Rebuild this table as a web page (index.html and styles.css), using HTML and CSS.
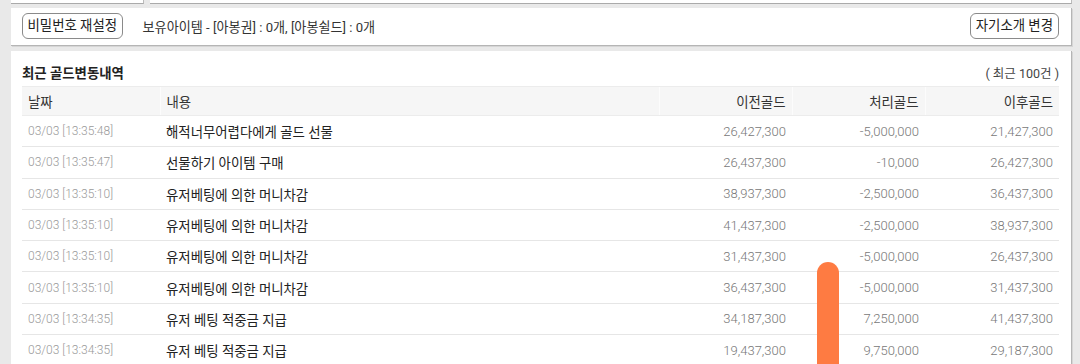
FILE: index.html
```html
<!DOCTYPE html>
<html lang="ko">
<head>
<meta charset="utf-8">
<link rel="stylesheet" href="styles.css">
</head>
<body>
<div class="page">
  <div class="top-strip">
    <div class="strip-box strip-left"></div>
    <div class="strip-box strip-right"></div>
  </div>
  <div class="panel info-bar">
    <button class="btn">비밀번호 재설정</button>
    <span class="items">보유아이템 - [아봉권] : 0개, [아봉쉴드] : 0개</span>
    <button class="btn btn-right">자기소개 변경</button>
  </div>
  <div class="panel history">
    <div class="history-head">
      <span class="title">최근 골드변동내역</span>
      <span class="count">( 최근 100건 )</span>
    </div>
    <table class="gold-table">
      <colgroup>
        <col class="c-date"><col class="c-desc"><col class="c-num"><col class="c-num"><col class="c-num3">
      </colgroup>
      <thead>
        <tr><th class="l">날짜</th><th class="l">내용</th><th>이전골드</th><th>처리골드</th><th>이후골드</th></tr>
      </thead>
      <tbody>
        <tr><td class="date">03/03 [13:35:48]</td><td class="desc">해적너무어렵다에게 골드 선물</td><td class="num">26,427,300</td><td class="num">-5,000,000</td><td class="num">21,427,300</td></tr>
        <tr><td class="date">03/03 [13:35:47]</td><td class="desc">선물하기 아이템 구매</td><td class="num">26,437,300</td><td class="num">-10,000</td><td class="num">26,427,300</td></tr>
        <tr><td class="date">03/03 [13:35:10]</td><td class="desc">유저베팅에 의한 머니차감</td><td class="num">38,937,300</td><td class="num">-2,500,000</td><td class="num">36,437,300</td></tr>
        <tr><td class="date">03/03 [13:35:10]</td><td class="desc">유저베팅에 의한 머니차감</td><td class="num">41,437,300</td><td class="num">-2,500,000</td><td class="num">38,937,300</td></tr>
        <tr><td class="date">03/03 [13:35:10]</td><td class="desc">유저베팅에 의한 머니차감</td><td class="num">31,437,300</td><td class="num">-5,000,000</td><td class="num">26,437,300</td></tr>
        <tr><td class="date">03/03 [13:35:10]</td><td class="desc">유저베팅에 의한 머니차감</td><td class="num">36,437,300</td><td class="num">-5,000,000</td><td class="num">31,437,300</td></tr>
        <tr><td class="date">03/03 [13:34:35]</td><td class="desc">유저 베팅 적중금 지급</td><td class="num">34,187,300</td><td class="num">7,250,000</td><td class="num">41,437,300</td></tr>
        <tr><td class="date">03/03 [13:34:35]</td><td class="desc">유저 베팅 적중금 지급</td><td class="num">19,437,300</td><td class="num">9,750,000</td><td class="num">29,187,300</td></tr>
      </tbody>
    </table>
  </div>
</div>
<div class="marker"></div>
</body>
</html>
```

FILE: styles.css
```css
html, body {
  margin: 0;
  padding: 0;
  background: #e9e9e9;
  height: 364px;
  overflow: hidden;
  font-family: Roboto, "Noto Sans CJK KR", sans-serif;
  color: #333;
}

.page {
  width: 1061px;
  margin-left: 11px;
}

.top-strip {
  display: flex;
  gap: 6px;
  height: 4px;
}

.strip-box {
  background: #fff;
  border-bottom: 1px solid #aaa;
  border-right: 1px solid #bbb;
  box-sizing: border-box;
}

.strip-left { width: 133px; }
.strip-right { flex: 1; }

.panel {
  background: #fff;
  border-right: 1px solid #b5b5b5;
  border-bottom: 1px solid #b5b5b5;
  box-shadow: 1px 1px 0 #d6d6d6;
  box-sizing: border-box;
}

.info-bar {
  margin-top: 4px;
  height: 38px;
  display: flex;
  align-items: center;
  padding: 0 12px 1px 11px;
  font-size: 13.4px;
}

.btn {
  font-family: Roboto, "Noto Sans CJK KR", sans-serif;
  font-size: 13.4px;
  color: #222;
  background: #fff;
  border: 1px solid #8a8a8a;
  border-radius: 6px;
  height: 26px;
  padding: 0 4.5px;
  line-height: 24px;
}

.items {
  margin-left: 20px;
  color: #333;
  font-size: 13.1px;
  font-weight: 400;
}

.btn-right {
  margin-left: auto;
  padding: 0 5px;
}

.history {
  margin-top: 5px;
  padding: 11px 12px 0 11px;
  height: 320px;
}

.history-head {
  display: flex;
  justify-content: space-between;
  align-items: center;
  height: 20px;
  margin-bottom: 4px;
}

.title {
  font-size: 13.4px;
  font-weight: 700;
  color: #222;
}

.count {
  font-size: 12.5px;
  color: #444;
  margin-right: 0;
}

.gold-table {
  width: 1037px;
  border-collapse: collapse;
  table-layout: fixed;
}

.c-date { width: 138px; }
.c-desc { width: 499px; }
.c-num { width: 133px; }
.c-num3 { width: 134px; }

.gold-table th {
  height: 28px;
  background: #f6f6f6;
  border-top: 1px solid #ececec;
  border-bottom: 1px solid #ececec;
  border-left: 1px solid #fcfcfc;
  font-size: 13.4px;
  font-weight: 400;
  color: #333;
  text-align: right;
  padding: 0 6px 0 6px;
}

.gold-table th:first-child { border-left: none; }

.gold-table th.l {
  text-align: left;
}

.gold-table td {
  height: 30.3px;
  border-bottom: 1px solid #e6e6e6;
  padding: 0 6px;
  white-space: nowrap;
}

.date {
  font-size: 12px;
  font-weight: 300;
  color: #9a9a9a;
}

.desc {
  font-size: 13.4px;
  color: #222;
}

.num {
  text-align: right;
  font-size: 13px;
  font-weight: 300;
  color: #777;
}

.marker {
  position: absolute;
  left: 817px;
  top: 262px;
  width: 22px;
  height: 130px;
  border-radius: 11px;
  background: #fe7b42;
}
```
